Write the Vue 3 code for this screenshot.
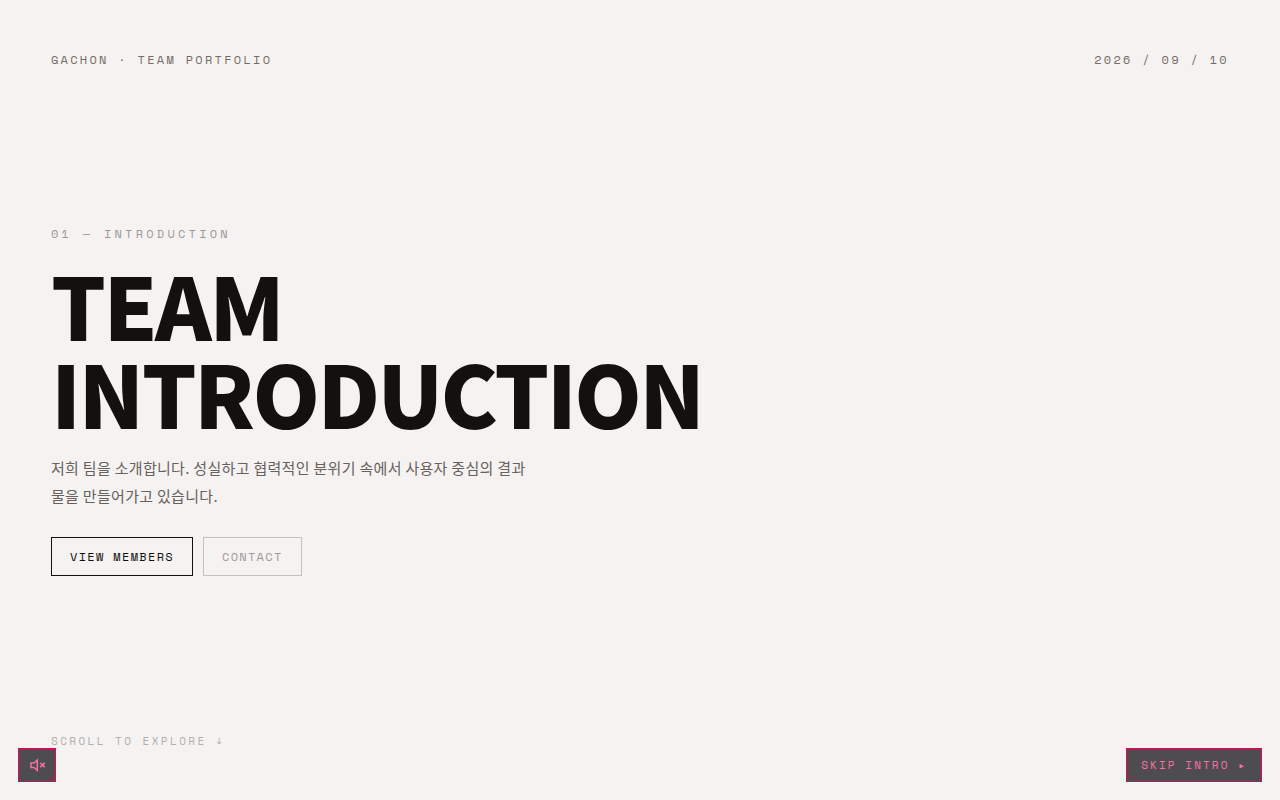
<script setup>
const date = ['2026', '09', '10'].join(' / ')
</script>

<template>
  <main class="hero">
    <header class="top">
      <span>GACHON · TEAM PORTFOLIO</span>
      <time datetime="2026-09-10">{{ date }}</time>
    </header>

    <section class="intro">
      <p class="eyebrow">01 — INTRODUCTION</p>
      <h1>TEAM<br />INTRODUCTION</h1>
      <p class="lead">저희 팀을 소개합니다. 성실하고 협력적인 분위기 속에서 사용자 중심의 결과물을 만들어가고 있습니다.</p>
      <nav class="actions">
        <a class="btn primary" href="#members">VIEW MEMBERS</a>
        <a class="btn" href="#contact">CONTACT</a>
      </nav>
    </section>

    <footer class="scroll">SCROLL TO EXPLORE ↓</footer>

    <button class="chip mute" type="button" aria-label="Unmute">
      <svg viewBox="0 0 16 16" width="16" height="16" fill="none" stroke="currentColor" stroke-width="1.5">
        <path d="M8.3 3L5 6H2v4.4h3l3.3 3z" />
        <path d="M11.3 5.9l4.4 4.4M15.7 5.9l-4.4 4.4" />
      </svg>
    </button>
    <button class="chip skip" type="button">SKIP INTRO ▸</button>
  </main>
</template>

<style>
body {
  background: #f5f3f1;
}
</style>

<style scoped>
.hero {
  box-sizing: border-box;
  min-height: 100vh;
  padding: 51px 51px 50px;
  display: flex;
  flex-direction: column;
  justify-content: space-between;
  background: #f5f3f1;
  color: #13100e;
  font-family: "Space Mono", "Liberation Mono", monospace;
  font-size: 12px;
  line-height: 18px;
}
.top {
  display: flex;
  justify-content: space-between;
  color: #756b66;
  letter-spacing: 0.19em;
}
.eyebrow {
  margin: 0 0 17px;
  color: #9d9896;
  letter-spacing: 0.27em;
}
h1 {
  margin: 0;
  font-family: "Noto Sans CJK KR", sans-serif;
  font-size: 86px;
  font-weight: 900;
  line-height: 88px;
  letter-spacing: -0.03em;
}
.lead {
  margin: 18px 0 27px;
  max-width: 480px;
  color: #68605c;
  font-family: "Noto Sans CJK KR", sans-serif;
  font-size: 15px;
  line-height: 28px;
  letter-spacing: 0.02em;
}
.actions {
  display: flex;
  gap: 10px;
}
.btn {
  padding: 10px 18px 9px;
  border: 1px solid #c4c2c0;
  color: #9d9a98;
  letter-spacing: 0.11em;
  text-decoration: none;
}
.primary {
  border-color: #13100e;
  color: #13100e;
}
.scroll {
  color: #b2aeab;
  font-size: 11px;
  letter-spacing: 0.22em;
}
.chip {
  position: fixed;
  bottom: 18px;
  box-sizing: border-box;
  height: 34px;
  display: flex;
  align-items: center;
  justify-content: center;
  border: 1px solid #c2185b;
  box-shadow: inset 0 0 0 1px rgba(194, 24, 91, 0.35);
  background: #4e4c4f;
  color: #f472a5;
  font-family: inherit;
  font-size: 11px;
  letter-spacing: 0.19em;
  cursor: pointer;
}
.mute {
  left: 18px;
  width: 38px;
  padding: 0;
}
.skip {
  right: 18px;
  padding: 0 14px;
}
</style>
